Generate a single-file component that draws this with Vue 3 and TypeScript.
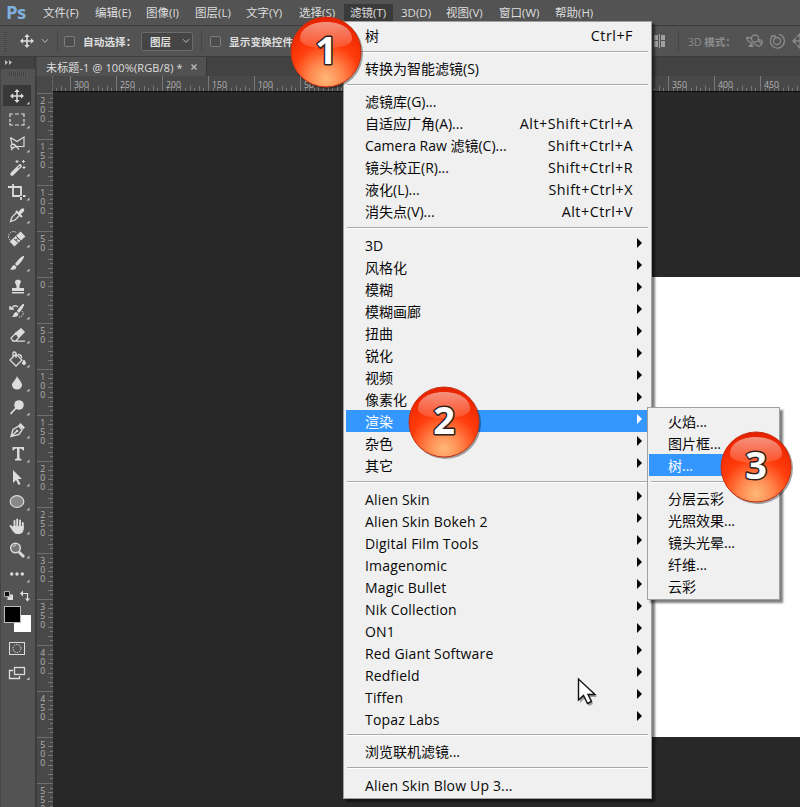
<script setup lang="ts">
interface MenuRow {
  label?: string
  shortcut?: string
  sub?: boolean
  active?: boolean
}

const menuBar: string[] = ['文件(F)', '编辑(E)', '图像(I)', '图层(L)', '文字(Y)', '选择(S)', '滤镜(T)', '3D(D)', '视图(V)', '窗口(W)', '帮助(H)']

const sep: MenuRow = {}
const sub = (label: string, active = false): MenuRow => ({ label, sub: true, active })

const filterMenu: MenuRow[] = [
  { label: '树', shortcut: 'Ctrl+F' },
  sep,
  { label: '转换为智能滤镜(S)' },
  sep,
  { label: '滤镜库(G)...' },
  { label: '自适应广角(A)...', shortcut: 'Alt+Shift+Ctrl+A' },
  { label: 'Camera Raw 滤镜(C)...', shortcut: 'Shift+Ctrl+A' },
  { label: '镜头校正(R)...', shortcut: 'Shift+Ctrl+R' },
  { label: '液化(L)...', shortcut: 'Shift+Ctrl+X' },
  { label: '消失点(V)...', shortcut: 'Alt+Ctrl+V' },
  sep,
  ...['3D', '风格化', '模糊', '模糊画廊', '扭曲', '锐化', '视频', '像素化'].map((l) => sub(l)),
  sub('渲染', true),
  sub('杂色'),
  sub('其它'),
  sep,
  ...['Alien Skin', 'Alien Skin Bokeh 2', 'Digital Film Tools', 'Imagenomic', 'Magic Bullet', 'Nik Collection', 'ON1', 'Red Giant Software', 'Redfield', 'Tiffen', 'Topaz Labs'].map((l) => sub(l)),
  sep,
  { label: '浏览联机滤镜...' },
  sep,
  { label: 'Alien Skin Blow Up 3...' },
]

const isLatin = (label: string): boolean => /^[\x20-\x7e]{3,}$/.test(label)

const renderMenu: MenuRow[] = [
  { label: '火焰...' },
  { label: '图片框...' },
  { label: '树...', active: true },
  sep,
  { label: '分层云彩' },
  { label: '光照效果...' },
  { label: '镜头光晕...' },
  { label: '纤维...' },
  { label: '云彩' },
]

const tools: string[] = ['move', 'marquee', 'lasso', 'wand', 'crop', 'eyedropper', 'heal', 'brush', 'stamp', 'history', 'eraser', 'bucket', 'blur', 'dodge', 'pen', 'type', 'select', 'ellipse', 'hand', 'zoom', 'more']

const STEP = 46
interface Tick { pos: number; len: number }
const makeTicks = (origin: number, end: number): Tick[] => {
  const out: Tick[] = []
  const first = origin - Math.ceil(origin / STEP) * STEP
  for (let base = first; base < end; base += STEP) {
    for (let i = 1; i < 10; i++) {
      const pos = Math.round(base + i * 4.6) + 0.5
      if (pos > 0 && pos < end) out.push({ pos, len: i % 2 ? 3 : 5 })
    }
  }
  return out
}
const makeMajors = (origin: number, end: number) => {
  const out: { pos: number; label: string }[] = []
  for (let i = -12; i < 16; i++) {
    const pos = origin + i * STEP
    if (pos > -1 && pos < end) out.push({ pos, label: String(Math.abs(i * 50)) })
  }
  return out
}
const hTicks = makeTicks(293, 747)
const hMajors = makeMajors(293, 747)
const vTicks = makeTicks(186, 716)
const vMajors = makeMajors(186, 716)

const badges = [1, 2, 3]
</script>

<template>
  <div class="app">
    <header class="menubar">
      <span class="logo">Ps</span>
      <nav class="menus">
        <span v-for="(m, i) in menuBar" :key="m" class="menu" :class="{ open: i === 6 }">{{ m }}</span>
      </nav>
    </header>

    <section class="options">
      <i class="grip"></i>
      <svg class="opt-move" width="16" height="16" viewBox="-8 -8 16 16"><path d="M-5 0H5M0-5V5" stroke="#ddd" stroke-width="1.6" /><path d="M0-7L2.7-3.9H-2.7ZM0 7L2.7 3.9H-2.7ZM-7 0L-3.9-2.7V2.7ZM7 0L3.9-2.7V2.7Z" fill="#ddd" /></svg>
      <svg class="opt-chev" width="8" height="6" viewBox="0 0 8 6"><path d="M1 1.2L4 4.4L7 1.2" fill="none" stroke="#bbb" /></svg>
      <i class="vline"></i>
      <i class="check"></i>
      <span class="opt-text auto">自动选择：</span>
      <div class="select"><span>图层</span><svg width="8" height="6" viewBox="0 0 8 6"><path d="M1 1.2L4 4.4L7 1.2" fill="none" stroke="#bbb" /></svg></div>
      <i class="vline"></i>
      <i class="check second"></i>
      <span class="opt-text">显示变换控件</span>
      <div class="opt-right">
        <svg width="11" height="14" viewBox="0 0 11 14"><path d="M0 1H4V6H0ZM0 7H4V13H0ZM7 1H11V6H7ZM7 7H11V13H7Z" fill="#a0a0a0" /><path d="M5.5 0V14" stroke="#a0a0a0" /></svg>
        <i class="vline r"></i>
        <span class="mode">3D <b>模式：</b></span>
        <svg class="three" width="62" height="18" viewBox="0 0 62 18" fill="none" stroke="#8c8c8c" stroke-width="1.3">
          <circle cx="9" cy="6.500" r="3.500" /><path d="M5.500 6L.5 5.500L2 9L8 12L13 14.500L16 12L12.500 9M12 8Q17 7 16 11" /><path d="M2 15H8L5 11Z" fill="#8c8c8c" stroke="none" />
          <circle cx="31" cy="9" r="3.500" /><path d="M26.500 4A7 7 0 1 0 33 2.200M25 4H30" />
          <path d="M47 9H61M54 2V16M50 6L47 9L50 12M51 5L54 2L57 5M51 13L54 16L57 13" />
        </svg>
      </div>
    </section>

    <section class="tabs">
      <div class="collapse"><svg width="8" height="5" viewBox="0 0 8 5"><path d="M0 0L3 2.500L0 5ZM4 0L7 2.500L4 5Z" fill="#bbb" /></svg></div>
      <div class="tab"><span>未标题-1 @ 100%(RGB/8) *</span><svg width="6" height="6" viewBox="0 0 6 6"><path d="M.5.5L5.500 5.500M5.500.5L.5 5.500" stroke="#bbb" stroke-width="1.400" /></svg></div>
    </section>

    <main class="work">
      <aside class="toolbar">
        <i class="hgrip"></i>
        <div v-for="t in tools" :key="t" class="tool" :class="{ current: t === 'move' }">
          <svg width="28" height="24" viewBox="-14 -12 28 24" fill="none" stroke="#dcdcdc" stroke-width="1.5">
            <g v-if="t === 'move'"><path d="M-5 0H5M0-5V5" /><path d="M0-7L2.700-3.900H-2.700ZM0 7L2.700 3.900H-2.700ZM-7 0L-3.900-2.700V2.700ZM7 0L3.900-2.700V2.700Z" fill="#dcdcdc" stroke="none" /></g>
            <path v-else-if="t === 'marquee'" d="M-7-3V-6H-4M-2-6H2M4-6H7V-3M7-1V2M7 3V5H4M2 5H-2M-4 5H-7V3M-7 2V-1" stroke-width="1.200" />
            <path v-else-if="t === 'lasso'" d="M-6.500-6.500L0-2.500L7-7V2.500H0L-5 0L-6.500-6.500M-1 2C-3-1-7 0-6 3C-5 4-2 4-1 2M-3 3L-6 6M-1 2L2 5.500" stroke-width="1.200" />
            <g v-else-if="t === 'wand'"><path d="M-5 6L3-2" stroke-width="3.600" stroke-linecap="round" /><path d="M1 0L3-2" stroke="#777" stroke-width="1.300" /><path d="M0-8V-5M-1.500-6.500H1.500M6.500-8V-5M5-6.500H8M7-2V1M5.500-.5H8.500" stroke-width="1" /></g>
            <path v-else-if="t === 'crop'" d="M-9-5H4V4M-4-8V4H3M6 4H8.500M4 5V8" stroke-width="1.800" />
            <g v-else-if="t === 'eyedropper'"><path d="M-6.500 6.500L-5 2L0-3L3 0L-2 5Z" stroke-width="1.300" /><path d="M-1-4L5 2" stroke-width="2" /><path d="M1-2L3-5Q6-8 7-6Q8-4 5-2L2 1Z" fill="#dcdcdc" stroke="none" /></g>
            <g v-else-if="t === 'heal'"><path d="M-5 5L6-5" stroke-width="7" /><path d="M-3 0L3 5M-1-3L5 3" stroke="#555" stroke-width="1" /><path d="M-1 1L2-1" stroke="#555" stroke-width="2" stroke-dasharray="1 1" /><path d="M-7 1A4.500 4.500 0 1 1 0-6" stroke-width="1" stroke-dasharray="1.500 1" /></g>
            <path v-else-if="t === 'brush'" d="M7-7C8-6 3 1 0 3L-2 1C0-2 5-8 7-7ZM-2.500 2L-.5 4C-1 7-4 7-7 6.500C-5 5-5 2-2.500 2Z" fill="#dcdcdc" stroke="none" />
            <path v-else-if="t === 'stamp'" d="M-.5-1C-1-3-2.500-4-2-5.500C-1.500-8 3.500-8 4-5.500C4-4 2.500-3 2.500-1V1H7V4H-5V1H-.5ZM-5 5H7V6.500H-5Z" fill="#dcdcdc" stroke="none" />
            <g v-else-if="t === 'history'"><path d="M7-7C8-6 4 0 2 2L0 0C2-3 6-8 7-7ZM-.5 1L1.500 3C1 6-2 6-5 6C-3 4-3 1-.5 1Z" fill="#dcdcdc" stroke="none" /><path d="M-7-2L-3-5C-1-6 0-5 1-4M-7-5V-2H-3" stroke-width="1.400" /><path d="M5 0C8 3 5 6 2 6" stroke-width="1" stroke-dasharray="1.500 1" /></g>
            <g v-else-if="t === 'eraser'"><path d="M-1-2L4-6L7-3L2 2Z" fill="#dcdcdc" /><path d="M-1-2L-6 3L-4 6H-1L2 2ZM-1 6.200H8" stroke-width="1.300" /></g>
            <g v-else-if="t === 'bucket'"><path d="M-1-5L5 1L-1 7L-7 1ZM-4-2V-6Q-3-8-1-6V-1" stroke-width="1.300" /><path d="M1-5Q5-5 5-1M7 1Q10 5.500 7 5.500Q4 5.500 7 1Z" fill="#dcdcdc" stroke-width="1" /></g>
            <path v-else-if="t === 'blur'" d="M0-7C2-3 5-1 5 2A5 4.600 0 0 1-5 2C-5-1-1-3 0-7Z" fill="#dcdcdc" stroke="none" />
            <g v-else-if="t === 'dodge'"><circle cx="2" cy="-2" r="4.800" fill="#dcdcdc" stroke="none" /><path d="M-1 1L-6.500 7" stroke-width="1.800" /></g>
            <g v-else-if="t === 'pen'"><path d="M-6 6.500L-4-.5L2-4L5 0L2 4.500ZM-6 6.500L0 1" stroke-width="1.400" /><circle cx="0" cy="1" r="1.300" fill="#dcdcdc" stroke="none" /><path d="M2.500-6L7-1.500" stroke-width="2.600" /></g>
            <path v-else-if="t === 'type'" d="M-4.500-7H7V-3.500H6Q5.500-5.500 2.500-5.500V3.500Q2.500 5 4.500 5V6.500H-2V5Q0 5 0 3.500V-5.500Q-3-5.500-3.500-3.500H-4.500Z" fill="#dcdcdc" stroke="none" />
            <path v-else-if="t === 'select'" d="M-4-8L5 1H1L3.500 6L1.500 7L-1 2L-4 5Z" fill="#dcdcdc" stroke="none" />
            <ellipse v-else-if="t === 'ellipse'" cx="0" cy="-.5" rx="6.800" ry="5.800" fill="#888" stroke-width="1.200" />
            <g v-else-if="t === 'hand'"><path d="M-2.500 2V-5M.2 1V-6.500M3 1V-5.500M5.800 2V-3M-3 4L-6.500 0" stroke-width="1.900" stroke-linecap="round" /><path d="M-4 0H6.700V3C6.700 6 4 8 2 8H0C-2 8-4 6-6 2Z" fill="#dcdcdc" stroke="none" /></g>
            <g v-else-if="t === 'zoom'"><circle cx="-1.500" cy="-2" r="4.800" fill="#777" /><path d="M2 2L7 7" stroke-width="2.800" /><path d="M-4-3Q-3-5-1-5" stroke-width="1" /></g>
            <g v-else fill="#dcdcdc" stroke="none"><circle cx="-5.300" r="1.700" /><circle cx="0" r="1.700" /><circle cx="5.300" r="1.700" /></g>
            <path d="M12.500 5.500V8.500H9.500Z" fill="#c4c4c4" stroke="none" />
          </svg>
        </div>
        <svg class="swatches" width="35" height="100" viewBox="0 0 35 100">
          <path d="M7.500 8.500H13V14H7.500Z" fill="#ddd" /><path d="M4.500 5.500H9.500V10.500H4.500Z" fill="#111" stroke="#aaa" />
          <path d="M22 7.500H27.500V13.500" fill="none" stroke="#ddd" stroke-width="1.200" /><path d="M20 7.500L23 4.500V10.500ZM27.500 15.500L25 12.500H30Z" fill="#ddd" />
          <rect x="14" y="29" width="17" height="17" fill="#fff" /><rect x="4.500" y="20.500" width="16" height="16" fill="#000" stroke="#bbb" />
          <rect x="9.500" y="56.500" width="15" height="12" fill="none" stroke="#ddd" /><circle cx="17" cy="62.500" r="4" fill="none" stroke="#ddd" stroke-dasharray="1.500 1" />
          <path d="M13 84.500H9.500V92.500H19.500V90" fill="none" stroke="#ddd" stroke-width="1.300" /><rect x="14.500" y="81.500" width="10" height="7" fill="#535353" stroke="#ddd" stroke-width="1.300" />
          <path d="M29.500 91V94H26.500Z" fill="#c4c4c4" />
        </svg>
      </aside>

      <div class="doc">
        <div class="ruler-row">
          <div class="corner"></div>
          <svg class="hruler" width="747" height="15">
            <path v-for="t in hTicks" :key="t.pos" :d="`M${t.pos} 15V${15 - t.len}`" stroke="#777" />
            <g v-for="m in hMajors" :key="m.pos">
              <path :d="`M${m.pos + 0.5} 0V15`" stroke="#777" />
              <text :x="m.pos + 4" y="12">{{ m.label }}</text>
            </g>
          </svg>
        </div>
        <div class="canvas-row">
          <svg class="vruler" width="16" height="716">
            <path v-for="t in vTicks" :key="t.pos" :d="`M16 ${t.pos}H${16 - t.len}`" stroke="#777" />
            <g v-for="m in vMajors" :key="m.pos">
              <path :d="`M0 ${m.pos + 0.5}H16`" stroke="#6e6e6e" />
              <text :y="m.pos + 10.5"><tspan v-for="(d, i) in m.label" :key="i" x="3.3" :dy="i ? 9.2 : 0">{{ d }}</tspan></text>
            </g>
          </svg>
          <div class="canvas"><div class="paper"></div></div>
        </div>
      </div>
    </main>

    <div class="popup main-pop">
      <template v-for="(r, i) in filterMenu" :key="i">
        <div v-if="r.label" class="row" :class="{ active: r.active, low: i > 10, latin: isLatin(r.label) }">
          <span class="label">{{ r.label }}</span>
          <span v-if="r.shortcut" class="short">{{ r.shortcut }}</span>
          <i v-if="r.sub" class="arrow"></i>
        </div>
        <div v-else class="sep" :class="{ low: i > 10 }"></div>
      </template>
    </div>

    <div class="popup sub-pop">
      <template v-for="(r, i) in renderMenu" :key="i">
        <div v-if="r.label" class="row low" :class="{ active: r.active }"><span class="label">{{ r.label }}</span></div>
        <div v-else class="sep low"></div>
      </template>
    </div>

    <svg v-for="n in badges" :key="n" class="badge" :class="`b${n}`" width="78" height="78" viewBox="-39 -39 78 78">
      <defs>
        <radialGradient :id="`ball${n}`" cx=".5" cy=".88" r=".9">
          <stop offset="0" stop-color="#ffb878" /><stop offset=".25" stop-color="#ff8a50" /><stop offset=".55" stop-color="#ff3d0c" /><stop offset=".85" stop-color="#f02800" /><stop offset="1" stop-color="#e02000" />
        </radialGradient>
        <linearGradient :id="`gloss${n}`" x1="0" y1="0" x2="0" y2="1">
          <stop offset="0" stop-color="#fff" stop-opacity=".5" /><stop offset="1" stop-color="#fff" stop-opacity=".12" />
        </linearGradient>
      </defs>
      <circle cx="1.500" cy="1.500" r="35.500" fill="#000" opacity=".35" />
      <circle r="35" :fill="`url(#ball${n})`" stroke="#c9300f" stroke-width="1" />
      <path d="M-26-13C-26-24-14-30 0-30S26-24 26-13C26-7 14-4 0-4S-26-7-26-13Z" :fill="`url(#gloss${n})`" />
      <text x="0" y="12" text-anchor="middle">{{ n }}</text>
    </svg>

    <svg class="cursor" width="24" height="32" viewBox="0 0 24 32"><path d="M4 4V26L9 21L13 29L17 27L14 20H21Z" fill="#000" opacity=".35" /><path d="M2.500 2V23L7.500 18.500L11.500 26.500L15.500 24.500L12 17.500H19Z" fill="#fff" stroke="#111" stroke-width="1.400" /></svg>
  </div>
</template>

<style>
body { margin: 0; overflow: hidden; }
</style>

<style scoped>
.app { position: relative; width: 800px; height: 807px; overflow: hidden; display: flex; flex-direction: column; background: #282828; color: #dedede; font-family: "Open Sans", "Noto Sans CJK SC", sans-serif; font-size: 12px; }
.menubar { height: 26px; flex: none; display: flex; background: #535353; border-bottom: 1px solid #3c3c3c; box-sizing: border-box; }
.logo { width: 36px; padding-left: 6px; font: bold 18.500px/24px "Open Sans", sans-serif; letter-spacing: -.7px; color: #7fb0de; box-sizing: border-box; }
.menus { display: grid; grid-template-columns: 52px 51px 49px 51px 53px 51px 51px 45px 53px 56px 60px; padding: 4px 0 0 1px; }
.menu { padding-left: 6px; height: 17px; line-height: 17px; white-space: nowrap; font-size: 11.5px; }
.menu.open { background: #3a3a3a; width: 43px; }
.options { height: 31px; flex: none; display: flex; align-items: center; background: #535353; border-bottom: 1px solid #3c3c3c; box-sizing: border-box; }
.grip { width: 3px; height: 19px; margin-left: 4px; flex: none; background: repeating-linear-gradient(#404040 0 1px, #5a5a5a 1px 2px); }
.opt-move { margin-left: 12px; flex: none; }
.opt-chev { margin-left: 6px; flex: none; }
.vline { width: 1px; height: 22px; margin-left: 8px; flex: none; background: #454545; }
.check { width: 9px; height: 9px; margin-left: 6px; border: 1px solid #7c7c7c; border-radius: 2px; flex: none; background: #4c4c4c; }
.check.second { margin-left: 8px; }
.opt-text { margin-left: 8px; font-size: 10.7px; font-weight: bold; white-space: nowrap; }
.auto { width: 52px; }
.select { width: 52px; height: 19px; margin-left: 6px; box-sizing: border-box; border: 1px solid #6b6b6b; border-radius: 2px; background: #454545; display: flex; align-items: center; justify-content: space-between; padding: 0 2px 0 8px; font-size: 10.5px; font-weight: bold; flex: none; }
.opt-right { display: flex; align-items: center; margin-left: auto; width: 146px; flex: none; overflow: hidden; }
.opt-right svg { flex: none; }
.vline.r { margin-left: 13px; }
.mode { width: 58px; margin-left: 9px; font-size: 10.5px; color: #8c8c8c; white-space: nowrap; flex: none; }
.tabs { height: 19px; flex: none; display: flex; background: #424242; gap: 2px; }
.collapse { width: 35px; height: 11px; background: #424242; padding: 3px 0 0 5px; box-sizing: border-box; line-height: 0; border-right: 1px solid #383838; }
.tab { width: 170px; height: 19px; display: flex; align-items: center; padding-left: 9px; gap: 8px; box-sizing: border-box; background: #515151; border-right: 1px solid #383838; font-size: 11px; letter-spacing: .13px; white-space: nowrap; }
.work { flex: 1; min-height: 0; display: flex; gap: 2px; background: #3c3c3c; }
.toolbar { width: 35px; margin-top: -7px; background: #535353; display: flex; flex-direction: column; flex: none; box-sizing: border-box; border-left: 1px solid #444; }
.hgrip { width: 18px; height: 4px; margin: 3px 0 8px 8px; flex: none; background: repeating-linear-gradient(90deg, #404040 0 1px, #5a5a5a 1px 2px); }
.tool { height: 23.900px; margin-left: 2px; width: 28px; flex: none; line-height: 0; }
.tool.current { background: linear-gradient(transparent 1px, #383838 1px 22px, transparent 22px); }
.swatches { margin: 0 0 0 -1.500px; flex: none; }
.doc { flex: 1; display: flex; flex-direction: column; min-width: 0; }
.ruler-row { height: 15px; display: flex; background: #484848; flex: none; }
.corner { width: 15px; border-right: 1px dotted #777; }
.hruler text, .vruler text { font: 8.700px "Open Sans", sans-serif; fill: #b4b4b4; }
.canvas-row { flex: 1; display: flex; min-height: 0; }
.vruler { background: #484848; flex: none; }
.canvas { flex: 1; background: #282828; border-top: 1px solid #0c0c0c; padding: 185px 0 0 293px; box-sizing: border-box; }
.paper { height: 460px; background: #fff; }
.popup { position: absolute; box-sizing: border-box; background: #f0f0f0; border: 1px solid #a0a0a0; color: #080808; font-size: 14px; padding-top: 2px; box-shadow: 3px 3px 2px rgba(0, 0, 0, .5); }
.main-pop { left: 343px; top: 21px; width: 309px; height: 778px; padding-top: 3px; }
.sub-pop { left: 647px; top: 407px; width: 133px; height: 193px; }
.row { height: 22px; margin: 0 3px 0 2px; padding-left: 19px; display: flex; align-items: center; line-height: 22px; white-space: nowrap; }
.row.low .label { padding-top: 2px; }
.row.low.latin .label { padding-top: 3px; letter-spacing: .17px; }
.row.active { background: #3397ff; color: #fff; }
.sub-pop .row { margin: 0 1px; }
.short { margin-left: auto; padding-right: 15px; font-size: 14.300px; letter-spacing: .52px; }
.arrow { margin-left: auto; margin-right: 6px; margin-top: -5px; border-left: 5px solid currentColor; border-top: 5px solid transparent; border-bottom: 5px solid transparent; }
.sep { height: 11px; margin: 0 3px; background: linear-gradient(transparent 4px, #a8a8a8 4px 5px, #fff 5px 6px, transparent 6px); }
.sep.low { background: linear-gradient(transparent 5px, #a8a8a8 5px 6px, #fff 6px 7px, transparent 7px); }
.badge { position: absolute; }
.badge text { font: bold 38px "Open Sans", sans-serif; fill: #fff; stroke: #30201c; stroke-width: 3px; paint-order: stroke; stroke-linejoin: round; }
.b1 { left: 287px; top: 13px; }
.b2 { left: 405px; top: 383px; }
.b3 { left: 717px; top: 428px; }
.cursor { position: absolute; left: 576px; top: 677px; }
</style>
